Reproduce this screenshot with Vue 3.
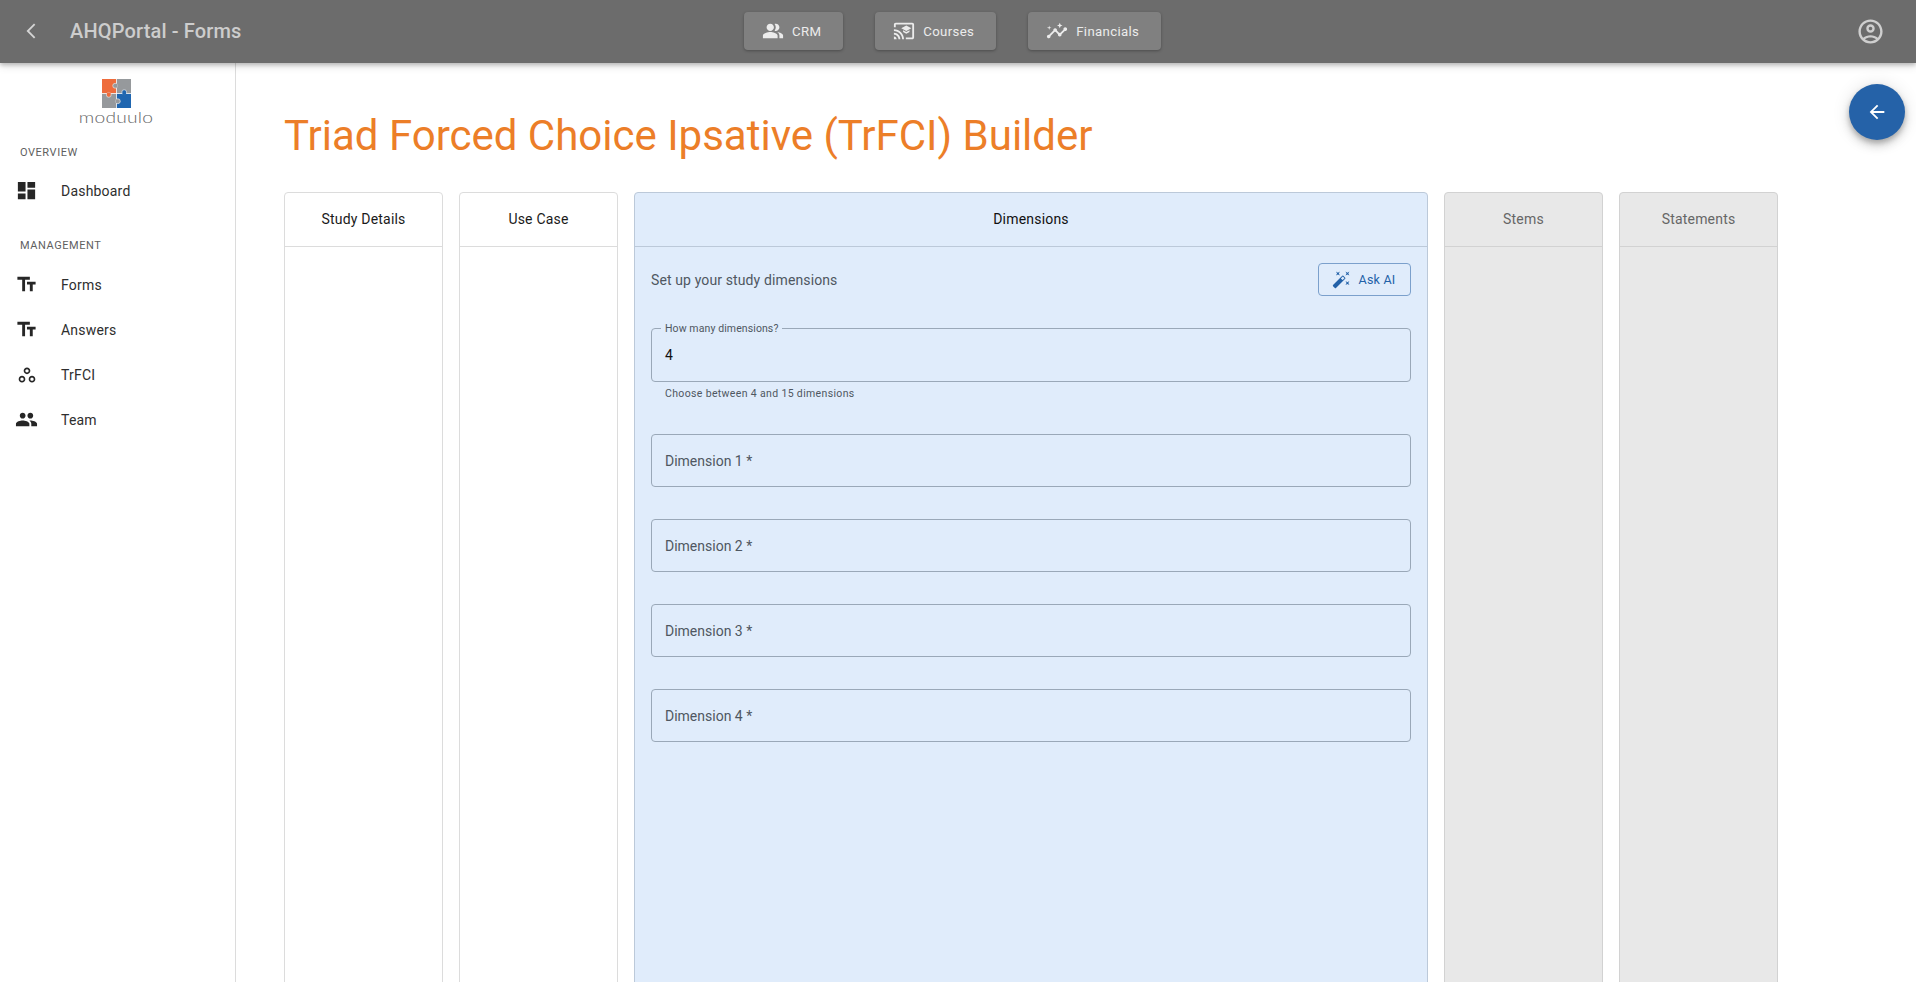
<script setup>
const icons = {
  back: 'M17.77 3.77 16 2 6 12l10 10 1.77-1.77L9.54 12z',
  crm: 'M16.67 13.13C18.04 14.06 19 15.32 19 17v3h4v-3c0-2.18-3.57-3.47-6.33-3.87zM15 12c2.21 0 4-1.79 4-4s-1.79-4-4-4c-.47 0-.91.1-1.33.24C14.5 5.27 15 6.58 15 8s-.5 2.73-1.33 3.76c.42.14.86.24 1.33.24zM9 12c2.21 0 4-1.79 4-4s-1.79-4-4-4-4 1.79-4 4 1.79 4 4 4zM9 13c-2.67 0-8 1.34-8 4v3h16v-3c0-2.66-5.33-4-8-4z',
  courses: 'M21 3H3c-1.1 0-2 .9-2 2v3h2V5h18v14h-7v2h7c1.1 0 2-.9 2-2V5c0-1.1-.9-2-2-2zM1 18v3h3c0-1.66-1.34-3-3-3zm0-4v2c2.76 0 5 2.24 5 5h2c0-3.87-3.13-7-7-7zm0-4v2c4.97 0 9 4.03 9 9h2c0-6.08-4.93-11-11-11zm10 1.09v2L14.5 15l3.5-1.91v-2L14.5 13 11 11.09zM14.5 6 9 9l5.5 3L20 9l-5.5-3z',
  financials: 'M21 8c-1.45 0-2.26 1.44-1.93 2.51l-3.55 3.56c-.3-.09-.74-.09-1.04 0l-2.55-2.55C12.27 10.45 11.46 9 10 9c-1.45 0-2.27 1.44-1.93 2.52l-4.56 4.55C2.44 15.74 1 16.55 1 18c0 1.1.9 2 2 2 1.45 0 2.26-1.44 1.93-2.51l4.55-4.56c.3.09.74.09 1.04 0l2.55 2.55C12.73 16.55 13.54 18 15 18c1.45 0 2.27-1.44 1.93-2.52l3.56-3.55c1.07.33 2.51-.48 2.51-1.93 0-1.1-.9-2-2-2zM15 9l.94-2.07L18 6l-2.06-.93L15 3l-.92 2.07L12 6l2.08.93zM3.5 11 4 9l2-.5L4 8l-.5-2L3 8l-2 .5L3 9z',
  account: 'M12 2C6.48 2 2 6.48 2 12s4.48 10 10 10 10-4.48 10-10S17.52 2 12 2zM7.35 18.5C8.66 17.56 10.26 17 12 17s3.34.56 4.65 1.5c-1.31.94-2.91 1.5-4.65 1.5s-3.34-.56-4.65-1.5zm10.79-1.38C16.45 15.8 14.32 15 12 15s-4.45.8-6.14 2.12C4.7 15.73 4 13.95 4 12c0-4.42 3.58-8 8-8s8 3.58 8 8c0 1.95-.7 3.73-1.86 5.12zM12 6c-1.93 0-3.5 1.57-3.5 3.5S10.07 13 12 13s3.5-1.57 3.5-3.5S13.93 6 12 6zm0 5c-.83 0-1.5-.67-1.5-1.5S11.17 8 12 8s1.5.67 1.5 1.5S12.83 11 12 11z',
  dashboard: 'M3 13h8V3H3v10zm0 8h8v-6H3v6zm10 0h8V11h-8v10zm0-18v6h8V3h-8z',
  text: 'M2.5 4v3h5v12h3V7h5V4h-13zm19 5h-9v3h3v7h3v-7h3V9z',
  work: 'M6 13c-2.2 0-4 1.8-4 4s1.8 4 4 4 4-1.8 4-4-1.8-4-4-4zm0 6c-1.1 0-2-.9-2-2s.9-2 2-2 2 .9 2 2-.9 2-2 2zm6-16C9.8 3 8 4.8 8 7s1.8 4 4 4 4-1.8 4-4-1.8-4-4-4zm0 6c-1.1 0-2-.9-2-2s.9-2 2-2 2 .9 2 2-.9 2-2 2zm6 4c-2.2 0-4 1.8-4 4s1.8 4 4 4 4-1.8 4-4-1.8-4-4-4zm0 6c-1.1 0-2-.9-2-2s.9-2 2-2 2 .9 2 2-.9 2-2 2z',
  team: 'M16 11c1.66 0 2.99-1.34 2.99-3S17.66 5 16 5c-1.66 0-3 1.34-3 3s1.34 3 3 3zm-8 0c1.66 0 2.99-1.34 2.99-3S9.66 5 8 5C6.34 5 5 6.34 5 8s1.34 3 3 3zm0 2c-2.33 0-7 1.17-7 3.5V19h14v-2.5c0-2.33-4.67-3.5-7-3.5zm8 0c-.29 0-.62.02-.97.05 1.16.84 1.97 1.97 1.97 3.45V19h6v-2.5c0-2.33-4.67-3.5-7-3.5z',
  wand: 'M7.5 5.6 10 7 8.6 4.5 10 2 7.5 3.4 5 2l1.4 2.5L5 7zm12 9.8L17 14l1.4 2.5L17 19l2.5-1.4L22 19l-1.4-2.5L22 14zM22 2l-2.5 1.4L17 2l1.4 2.5L17 7l2.5-1.4L22 7l-1.4-2.5zm-7.63 5.29a.9959.9959 0 0 0-1.41 0L1.29 18.96c-.39.39-.39 1.02 0 1.41l2.34 2.34c.39.39 1.02.39 1.41 0L16.7 11.05c.39-.39.39-1.02 0-1.41l-2.33-2.35zm-1.03 5.49-2.12-2.12 2.44-2.44 2.12 2.12-2.44 2.44z',
  arrow: 'M20 11H7.83l5.59-5.59L12 4l-8 8 8 8 1.41-1.41L7.83 13H20v-2z'
}
const navButtons = [
  { label: 'CRM', icon: icons.crm },
  { label: 'Courses', icon: icons.courses },
  { label: 'Financials', icon: icons.financials }
]
const management = [
  { label: 'Forms', icon: icons.text },
  { label: 'Answers', icon: icons.text },
  { label: 'TrFCI', icon: icons.work, small: true },
  { label: 'Team', icon: icons.team }
]
const dimensions = ['Dimension 1 *', 'Dimension 2 *', 'Dimension 3 *', 'Dimension 4 *']
</script>

<template>
  <div class="page">
    <header class="appbar">
      <div class="bar-left">
        <svg class="chevron" viewBox="0 0 24 24"><path :d="icons.back" /></svg>
        <span class="app-title">AHQPortal - Forms</span>
      </div>
      <nav class="bar-nav">
        <button v-for="b in navButtons" :key="b.label" class="nav-btn">
          <svg class="nav-icon" viewBox="0 0 24 24"><path :d="b.icon" /></svg>
          <span>{{ b.label }}</span>
        </button>
      </nav>
      <svg class="account" viewBox="0 0 24 24"><path :d="icons.account" /></svg>
    </header>

    <div class="body">
      <aside class="sidebar">
        <div class="logo">
          <svg class="puzzle" viewBox="0 0 30 30">
            <rect x="0" y="0" width="14.6" height="14.6" fill="#ee6c3c" />
            <rect x="15.4" y="0" width="14.6" height="14.6" fill="#96999c" />
            <rect x="0" y="15.4" width="14.6" height="14.6" fill="#96999c" />
            <rect x="15.4" y="15.4" width="14.6" height="14.6" fill="#1f66b0" />
            <circle cx="13.6" cy="7" r="2.5" fill="#96999c" stroke="#e8e8e8" stroke-width=".7" />
            <rect x="14" y="5.2" width="2" height="3.6" fill="#96999c" />
            <circle cx="7" cy="16.4" r="2.5" fill="#ee6c3c" stroke="#e8e8e8" stroke-width=".7" />
            <rect x="5.2" y="14" width="3.6" height="2" fill="#ee6c3c" />
            <circle cx="23" cy="13.6" r="2.5" fill="#1f66b0" stroke="#e8e8e8" stroke-width=".7" />
            <rect x="21.2" y="14.5" width="3.6" height="2" fill="#1f66b0" />
            <circle cx="16.4" cy="23" r="2.5" fill="#96999c" stroke="#e8e8e8" stroke-width=".7" />
            <rect x="14" y="21.2" width="2" height="3.6" fill="#96999c" />
          </svg>
          <span class="wordmark">moduulo</span>
        </div>
        <div class="section-label first">OVERVIEW</div>
        <div class="nav-item">
          <svg class="side-icon" viewBox="0 0 24 24"><path :d="icons.dashboard" /></svg>
          <span>Dashboard</span>
        </div>
        <div class="section-label second">MANAGEMENT</div>
        <div v-for="m in management" :key="m.label" class="nav-item">
          <svg class="side-icon" :class="{ small: m.small }" viewBox="0 0 24 24"><path :d="m.icon" /></svg>
          <span>{{ m.label }}</span>
        </div>
      </aside>

      <main class="main">
        <h1 class="title">Triad Forced Choice Ipsative (TrFCI) Builder</h1>
        <div class="columns">
          <section class="col narrow"><div class="col-head">Study Details</div></section>
          <section class="col narrow"><div class="col-head">Use Case</div></section>
          <section class="col active">
            <div class="col-head">Dimensions</div>
            <div class="col-body">
              <div class="intro">
                <span class="intro-text">Set up your study dimensions</span>
                <button class="ask">
                  <svg class="ask-icon" viewBox="0 0 24 24"><path :d="icons.wand" /></svg>
                  <span>Ask AI</span>
                </button>
              </div>
              <div class="field first-field">
                <span class="legend">How many dimensions?</span>
                <span class="value">4</span>
              </div>
              <div class="helper">Choose between 4 and 15 dimensions</div>
              <div v-for="d in dimensions" :key="d" class="field dim">
                <span class="placeholder">{{ d }}</span>
              </div>
            </div>
          </section>
          <section class="col narrow muted"><div class="col-head">Stems</div></section>
          <section class="col narrow muted"><div class="col-head">Statements</div></section>
        </div>
        <button class="fab">
          <svg class="fab-icon" viewBox="0 0 24 24"><path :d="icons.arrow" /></svg>
        </button>
      </main>
    </div>
  </div>
</template>

<style>
html, body { margin: 0; height: 100%; overflow: hidden; background: #fff; }
</style>

<style scoped>
.page {
  height: 982px;
  width: 1916px;
  overflow: hidden;
  display: flex;
  flex-direction: column;
  font-family: Roboto, "Liberation Sans", sans-serif;
  color: #1a1a1a;
}
.appbar {
  height: 63px;
  box-sizing: border-box;
  flex: none;
  display: flex;
  align-items: center;
  background: #6c6c6c;
  box-shadow: 0 2px 4px rgba(0, 0, 0, .22), 0 4px 8px rgba(0, 0, 0, .1);
  position: relative;
  z-index: 2;
  padding: 0 31px 1px 22px;
}
.bar-left { display: flex; align-items: center; width: 722px; flex: none; }
.chevron { width: 18px; height: 18px; fill: #d4d4d4; margin-right: 30px; }
.app-title { font-size: 20px; font-weight: 500; color: #cdcdcd; letter-spacing: .15px; }
.bar-nav { display: flex; gap: 32px; flex: 1; }
.nav-btn {
  height: 38px;
  display: flex;
  align-items: center;
  border: 0;
  border-radius: 4px;
  background: #808080;
  color: #ececec;
  font: 400 13.2px Roboto, sans-serif;
  letter-spacing: .35px;
  padding: 0 22px 0 18px;
  gap: 8px;
  box-shadow: 0 1px 3px rgba(0, 0, 0, .3);
}
.nav-icon { width: 22px; height: 22px; fill: #ececec; }
.account { width: 29px; height: 29px; fill: #cfcfcf; }

.body { flex: 1; display: flex; min-height: 0; }
.sidebar {
  width: 235px;
  flex: none;
  border-right: 1px solid #dcdcdc;
  box-sizing: content-box;
}
.logo { display: flex; flex-direction: column; align-items: center; padding: 16px 3px 0 0; }
.puzzle { width: 29px; height: 29px; }
.wordmark {
  font: 300 16px/14px Lato, sans-serif;
  letter-spacing: .2px;
  color: #666;
  margin-top: 2px;
  display: inline-block;
  transform: scaleX(1.2);
}
.section-label { font-size: 11px; line-height: 14px; letter-spacing: .55px; color: #5f5f5f; padding-left: 20px; font-weight: 400; }
.section-label.first { margin-top: 22px; }
.section-label.second { margin-top: 26px; }
.nav-item {
  height: 45px;
  display: flex;
  align-items: center;
  padding-left: 15px;
  font-size: 14px;
  letter-spacing: .2px;
  color: #2e2e2e;
}
.section-label.first + .nav-item { margin-top: 8px; }
.section-label.second + .nav-item { margin-top: 9px; }
.side-icon { width: 23px; height: 23px; fill: #262626; margin-right: 23px; flex: none; }
.side-icon.small { width: 20px; height: 20px; margin-left: 1.5px; margin-right: 24.5px; }

.main { flex: 1; position: relative; padding-left: 48px; min-width: 0; }
.title {
  margin: 0;
  padding-top: 48px;
  font-size: 42px;
  line-height: 50px;
  font-weight: 400;
  color: #ec7e28;
}
.columns { display: flex; gap: 16px; margin-top: 31px; height: 900px; }
.col {
  box-sizing: border-box;
  border: 1px solid #dcdcdc;
  border-radius: 4px;
  background: #fff;
}
.col.narrow { width: 159px; flex: none; }
.col.active { width: 794px; flex: none; background: #e0ecfb; border-color: #bcc9d9; }
.col.muted { background: #e8e8e8; color: #666; border-color: #d2d2d2; }
.col-head {
  height: 54px;
  box-sizing: border-box;
  display: flex;
  align-items: center;
  justify-content: center;
  font-size: 14px;
  letter-spacing: .2px;
  padding-bottom: 1px;
  border-bottom: 1px solid #dcdcdc;
}
.col.active .col-head { border-color: #bcc9d9; color: #111; }
.col.muted .col-head { border-color: #d2d2d2; }
.col-body { padding: 16px; }
.intro { display: flex; justify-content: space-between; align-items: center; height: 33px; }
.intro-text { font-size: 14px; letter-spacing: .12px; color: #4f5761; }
.ask {
  width: 93px;
  height: 33px;
  box-sizing: border-box;
  display: flex;
  align-items: center;
  justify-content: center;
  gap: 8px;
  background: transparent;
  border: 1px solid #7ba0cc;
  border-radius: 4px;
  color: #2261a8;
  font: 400 12.5px Roboto, sans-serif;
  letter-spacing: .2px;
  padding: 0 2px 0 0;
}
.ask-icon { width: 19px; height: 19px; fill: #2261a8; }
.field {
  box-sizing: border-box;
  height: 54px;
  border: 1px solid #9aa8b8;
  border-radius: 4px;
  position: relative;
  display: flex;
  align-items: center;
  padding-left: 13px;
}
.first-field { margin-top: 32px; }
.legend {
  position: absolute;
  top: -7px;
  left: 9px;
  padding: 0 4px;
  background: #e0ecfb;
  font-size: 10.5px;
  line-height: 13px;
  letter-spacing: .1px;
  color: #4f5761;
}
.value { font-size: 14px; color: #111; }
.helper { font-size: 10.5px; line-height: 14px; letter-spacing: .35px; color: #4f5761; margin: 5px 0 0 14px; }
.dim { height: 53px; margin-bottom: 32px; }
.helper + .dim { margin-top: 33px; }
.placeholder { font-size: 14px; letter-spacing: 0; color: #4f5761; }
.fab {
  position: absolute;
  top: 21px;
  right: 11px;
  width: 56px;
  height: 56px;
  border: 0;
  border-radius: 50%;
  background: #2562a8;
  display: flex;
  align-items: center;
  justify-content: center;
  padding: 0;
  box-shadow: 0 3px 5px rgba(0,0,0,.2), 0 6px 10px rgba(0,0,0,.14), 0 1px 18px rgba(0,0,0,.12);
}
.fab-icon { width: 22px; height: 22px; fill: #fff; }
</style>
